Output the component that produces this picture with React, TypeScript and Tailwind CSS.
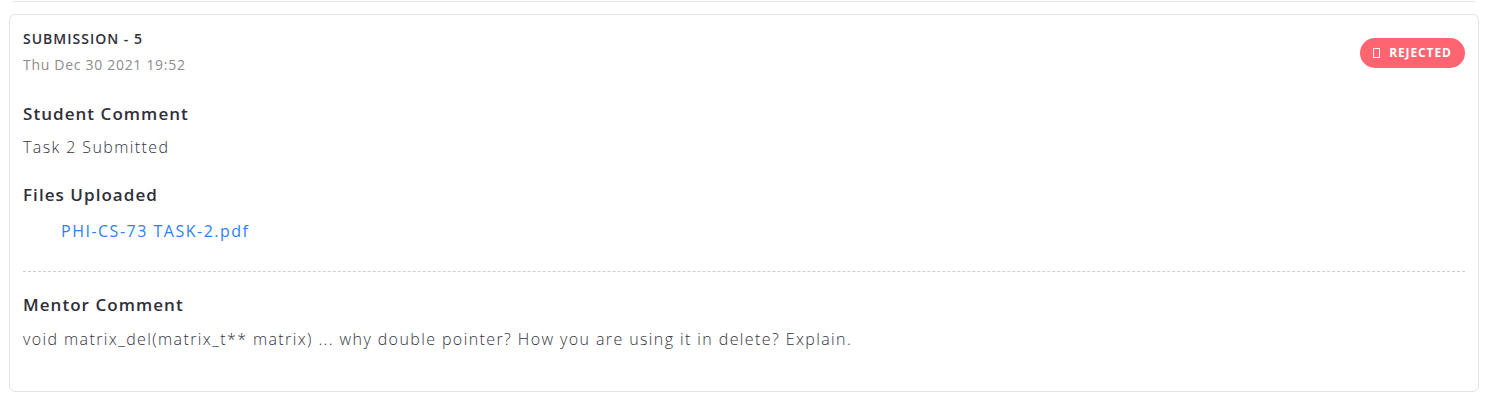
import React from "react";

/* Submission card */
function RejectedBadge() {
  return (
    <span className="inline-flex h-[30px] w-[105px] items-center justify-center gap-[9px] rounded-full bg-[#ff6471] text-[12px] font-bold tracking-[0.9px] text-white">
      <span className="inline-block h-[10px] w-[7px] border border-white" />
      REJECTED
    </span>
  );
}

export default function App() {
  return (
    <main
      className="min-h-[402px] bg-white pl-[9px] pr-[12px] text-[#2f2f3b]"
      style={{ fontFamily: '"Open Sans", "Liberation Sans", sans-serif' }}
    >
      {/* previous card's bottom edge */}
      <div className="mx-[3px] h-[2px] rounded-b-[6px] border-b border-[#e6e6e6]" />

      <section className="mt-[12px] rounded-[6px] border border-[#e3e3e3] px-[13px] pb-[41px] pt-[14px]">
        <div className="flex items-start justify-between">
          <div>
            <h2 className="text-[14px] font-semibold leading-[20px] tracking-[1px] text-[#2f2f3b]">SUBMISSION - 5</h2>
            <p className="mt-[6px] text-[14px] leading-[20px] tracking-[0.7px] text-[#8c8c8c]">Thu Dec 30 2021 19:52</p>
          </div>
          <div className="pt-[9px]">
            <RejectedBadge />
          </div>
        </div>

        <h3 className="mt-[27px] text-[17px] font-semibold leading-[24px] tracking-[1.05px]">Student Comment</h3>
        <p className="mt-[10px] text-[16px] font-light leading-[22px] tracking-[1.4px] text-[#33333d]">Task 2 Submitted</p>

        <h3 className="mt-[25px] text-[17px] font-semibold leading-[24px] tracking-[1.05px]">Files Uploaded</h3>
        <a href="#" className="ml-[38px] mt-[12px] block text-[16px] leading-[24px] tracking-[1.5px] text-[#2e7ff0]">
          PHI-CS-73 TASK-2.pdf
        </a>

        <div className="mt-[28px] border-t border-dashed border-[#cfcfcf]" />

        <h3 className="mt-[21px] text-[17px] font-semibold leading-[24px] tracking-[1.05px]">Mentor Comment</h3>
        <p className="mt-[11px] text-[16px] font-light leading-[22px] tracking-[1.4px] text-[#33333d]">
          void matrix_del(matrix_t** matrix) ... why double pointer? How you are using it in delete? Explain.
        </p>
      </section>
    </main>
  );
}
